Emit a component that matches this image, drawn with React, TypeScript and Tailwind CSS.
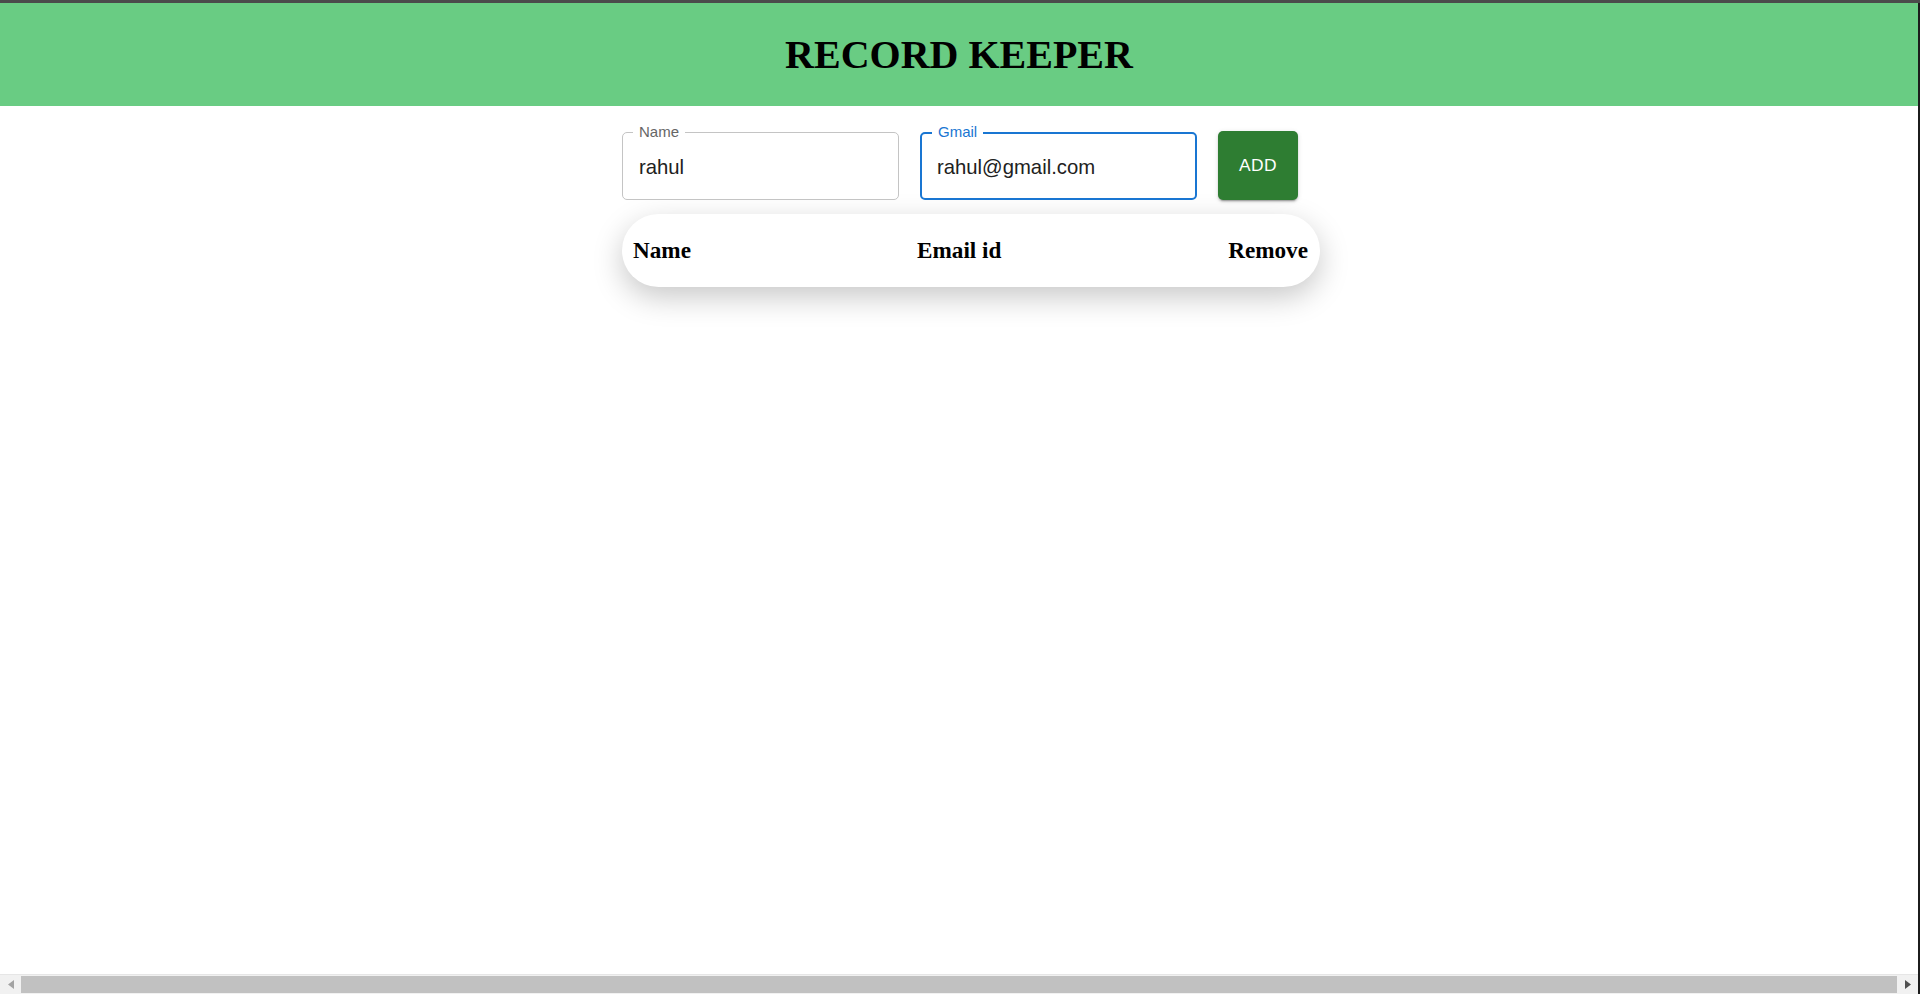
import { useState } from 'react';

type Field = {
    label: string;
    value: string;
    focused?: boolean;
};

function OutlinedField({ label, value, focused }: Field) {
    return (
        <div
            className={
                'relative h-[68px] w-[277px] rounded-[5px] bg-white flex items-center pt-[2px] ' +
                (focused ? 'border-[2.4px] border-[#1976d2] pl-[15px]' : 'border border-[#c4c4c4] pl-[16px]')
            }
        >
            <span
                className={
                    'absolute left-[10px] px-[6px] bg-white text-[15px] leading-none ' +
                    (focused ? 'top-[-10.4px] text-[#1976d2]' : 'top-[-9.3px] text-[#666666]')
                }
            >
                {label}
            </span>
            <span className="text-[20.3px] text-[#212121]">{value}</span>
        </div>
    );
}

export default function App() {
    const [name] = useState('rahul');
    const [gmail] = useState('rahul@gmail.com');

    return (
        <div className="h-screen w-full flex flex-col bg-white overflow-hidden" style={{ fontFamily: '"Liberation Sans", Arial, sans-serif' }}>
            <div className="h-[3px] bg-[#4b4b4b] shrink-0" />
            <div className="flex flex-1 min-h-0">
                <div className="flex-1 flex flex-col min-w-0">
                    {/* header */}
                    <header className="h-[103px] bg-[#69cc83] flex items-center justify-center shrink-0">
                        <h1 className="text-[40px] font-bold text-black" style={{ fontFamily: '"Liberation Serif", "Times New Roman", serif' }}>
                            RECORD KEEPER
                        </h1>
                    </header>

                    <main className="flex-1 pl-[2px]">
                        <div className="w-[676px] mx-auto mt-[25px]">
                            <div className="flex items-start gap-[21px]">
                                <div className="mt-[1px]">
                                    <OutlinedField label="Name" value={name} />
                                </div>
                                <div className="mt-[1px]">
                                    <OutlinedField label="Gmail" value={gmail} focused />
                                </div>
                                <button className="h-[69px] w-[80px] rounded-[5px] bg-[#2e7d32] text-white text-[17.4px] font-normal tracking-[0.02em] shadow-[0_3px_1px_-2px_rgba(0,0,0,0.2),0_2px_2px_0_rgba(0,0,0,0.14),0_1px_5px_0_rgba(0,0,0,0.12)]">
                                    ADD
                                </button>
                            </div>

                            <div className="mt-[14px] w-[698px] h-[73px] rounded-[37px] bg-white shadow-[0_10px_30px_rgba(0,0,0,0.22)] flex items-center pl-[11px] pr-[12px]">
                                <div
                                    className="flex items-center w-full text-[23.2px] font-bold text-black"
                                    style={{ fontFamily: '"Liberation Serif", "Times New Roman", serif' }}
                                >
                                    <span className="w-[284px]">Name</span>
                                    <span>Email id</span>
                                    <span className="ml-auto">Remove</span>
                                </div>
                            </div>
                        </div>
                    </main>

                    {/* horizontal scrollbar */}
                    <div className="h-[20px] shrink-0 bg-[#f1f1f1] border-t border-[#e6e6e6] flex items-stretch">
                        <div className="w-[21px] flex items-center justify-center">
                            <svg width="6" height="9" viewBox="0 0 6 9">
                                <path d="M6 0 L0 4.5 L6 9 Z" fill="#a3a3a3" />
                            </svg>
                        </div>
                        <div className="flex-1 my-[1px] bg-[#c1c1c1]" />
                        <div className="w-[21px] flex items-center justify-center">
                            <svg width="6" height="9" viewBox="0 0 6 9">
                                <path d="M0 0 L6 4.5 L0 9 Z" fill="#505050" />
                            </svg>
                        </div>
                    </div>
                </div>
                <div className="w-[2px] bg-[#1c1c1c] shrink-0" />
            </div>
        </div>
    );
}
